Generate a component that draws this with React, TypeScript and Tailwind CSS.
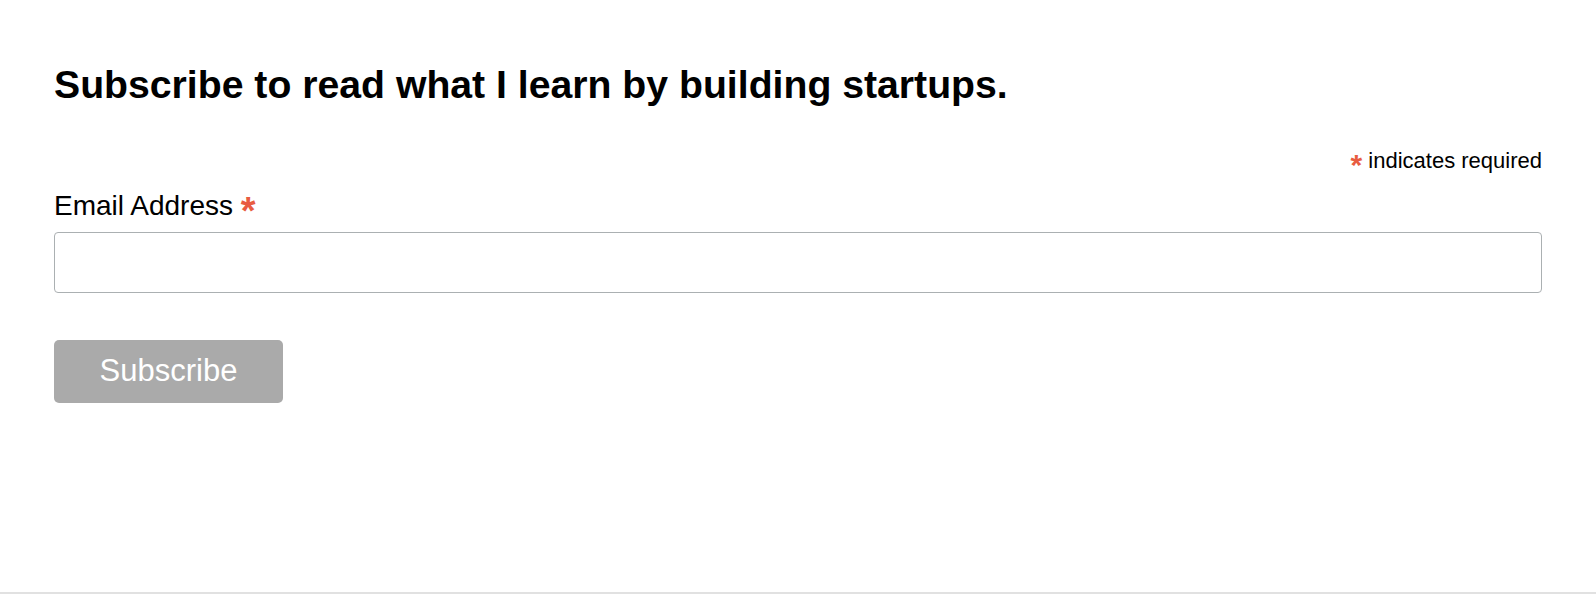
export default function App() {
  return (
    <div className="min-h-[594px] bg-white flex flex-col font-['Liberation_Sans',Arial,sans-serif] text-black">
      <div className="flex-1 px-[54px] pt-[62px]">
        <h1 className="text-[39.2px] leading-[45px] font-bold">
          Subscribe to read what I learn by building startups.
        </h1>

        <div className="mt-[41px] text-right text-[22px] leading-[26px]">
          <span className="relative top-[7px] text-[30px] leading-[0] font-bold text-[#e85c41]">*</span> indicates required
        </div>

        <label className="block mt-[16px] text-[28px] leading-[32px]">
          Email Address{" "}
          <span className="relative top-[9px] text-[38px] leading-[0] font-bold text-[#e85c41]">*</span>
        </label>

        <input
          type="email"
          className="mt-[10px] block w-full h-[61px] border border-[#abb0b2] rounded-[4px] px-3 text-[22px] outline-none"
        />

        <button className="mt-[47px] w-[229px] h-[63px] bg-[#aaaaaa] rounded-[5px] text-white text-[31px]">
          Subscribe
        </button>
      </div>

      <div className="h-[2px] bg-[#e1e1e1]" />
    </div>
  );
}
